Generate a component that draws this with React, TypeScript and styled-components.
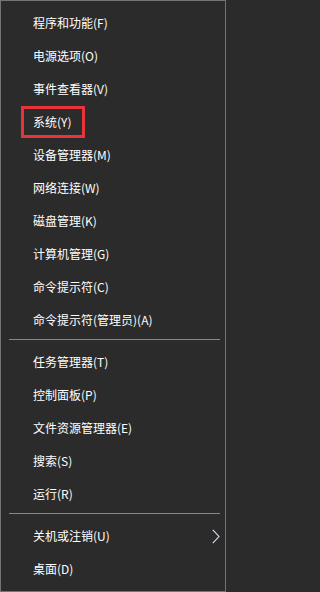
import { createGlobalStyle } from 'styled-components';
import styled from 'styled-components';

type Entry = { label: string; hasSubmenu?: boolean; marked?: boolean } | 'sep';

const entries: Entry[] = [
  { label: '程序和功能(F)' },
  { label: '电源选项(O)' },
  { label: '事件查看器(V)' },
  { label: '系统(Y)', marked: true },
  { label: '设备管理器(M)' },
  { label: '网络连接(W)' },
  { label: '磁盘管理(K)' },
  { label: '计算机管理(G)' },
  { label: '命令提示符(C)' },
  { label: '命令提示符(管理员)(A)' },
  'sep',
  { label: '任务管理器(T)' },
  { label: '控制面板(P)' },
  { label: '文件资源管理器(E)' },
  { label: '搜索(S)' },
  { label: '运行(R)' },
  'sep',
  { label: '关机或注销(U)', hasSubmenu: true },
  { label: '桌面(D)' },
];

const GlobalStyle = createGlobalStyle`
  html, body {
    margin: 0;
    padding: 0;
    background: #2b2b2b;
  }
`;

const Menu = styled.div`
  box-sizing: border-box;
  width: 226px;
  height: 592px;
  background: #2b2b2b;
  border: 1px solid #747474;
  padding: 5px 0 6px;
  display: flex;
  flex-direction: column;
  font-family: 'Noto Sans CJK SC', 'Noto Sans', sans-serif;
  font-size: 12px;
  color: #ffffff;
`;

const Row = styled.div`
  height: 33px;
  flex-shrink: 0;
  display: flex;
  align-items: center;
  padding: 0 5px 0 32px;
`;

const Label = styled.span<{ $marked?: boolean }>`
  position: relative;
  line-height: 16px;
  white-space: nowrap;

  ${(p) =>
    p.$marked &&
    `
    &::after {
      content: '';
      position: absolute;
      top: -8px;
      bottom: -8px;
      left: -12px;
      right: -14px;
      border: 3px solid #ea3338;
      box-sizing: border-box;
    }
  `}
`;

const Separator = styled.div`
  flex-shrink: 0;
  height: 1px;
  margin: 3px 5px 5px 8px;
  background: #888888;
`;

const Chevron = styled.svg`
  margin-left: auto;
  width: 8px;
  height: 15px;
  margin-top: 2px;
`;

export default function App() {
  return (
    <>
      <GlobalStyle />
      <Menu>
        {entries.map((e, i) =>
          e === 'sep' ? (
            <Separator key={i} />
          ) : (
            <Row key={i}>
              <Label $marked={e.marked}>{e.label}</Label>
              {e.hasSubmenu && (
                <Chevron viewBox="0 0 8 15">
                  <path d="M0.8 0.8 L7 7.5 L0.8 14.2" fill="none" stroke="#d9e4f2" strokeWidth="1.1" />
                </Chevron>
              )}
            </Row>
          )
        )}
      </Menu>
    </>
  );
}
